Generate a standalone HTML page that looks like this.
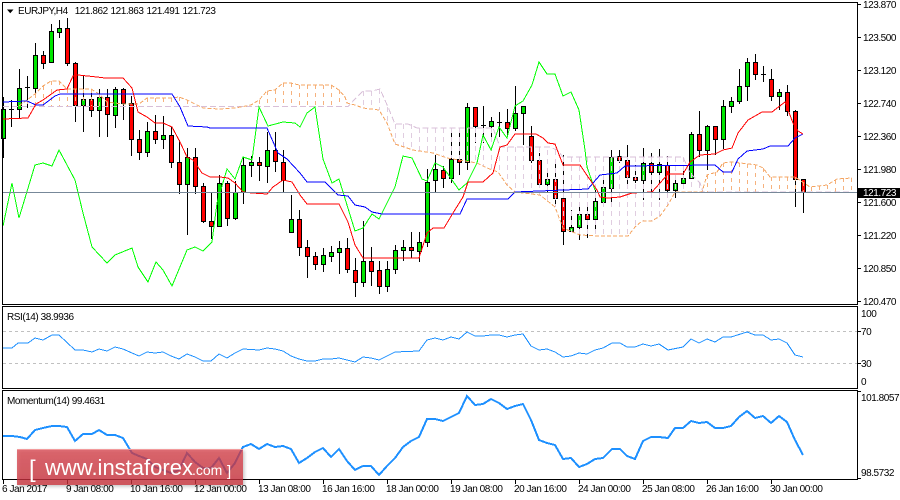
<!DOCTYPE html>
<html><head><meta charset="utf-8"><title>EURJPY,H4</title>
<style>
html,body{margin:0;padding:0;background:#fff;width:900px;height:500px;overflow:hidden}
svg{display:block}
text{font-family:"Liberation Sans",sans-serif;font-size:10px;letter-spacing:-.45px;fill:#000}
.a{shape-rendering:crispEdges;fill:none}
</style></head><body>
<svg width="900" height="500" viewBox="0 0 900 500" xmlns="http://www.w3.org/2000/svg">
<defs><filter id="s" x="-5%" y="-20%" width="110%" height="140%"><feDropShadow dx="1.5" dy="1.5" stdDeviation="1.5" flood-color="#000" flood-opacity=".3"/></filter>
<linearGradient id="g" x1="0" y1="0" x2="0" y2="1"><stop offset="0" stop-color="#d63c44" stop-opacity=".72"/><stop offset="1" stop-color="#c8303a" stop-opacity=".76"/></linearGradient></defs>

<!-- wicks -->
<path class="a" stroke="#000" d="M3.5 97V158M11.5 100V127M9 109.5h5M19.5 69V118M27.5 76V108M25 87.5h5M35.5 43V95M43.5 51V69M51.5 24V63M59.5 20V38M67.5 18V66M75.5 62V122M83.5 76V132M91.5 89V117M99.5 89V137M107.5 89V137M115.5 87V128M123.5 88V120M131.5 96V156M139.5 130V160M147.5 122V157M155.5 115V144M163.5 116V149M171.5 127V168M179.5 140V194M187.5 148V235M195.5 148V194M203.5 183V223M211.5 192V239M219.5 175V227M227.5 181V226M235.5 181V220M243.5 157V204M251.5 156V177M259.5 157V181M267.5 132V183M275.5 132V172M283.5 150V192M291.5 195V232M299.5 210V256M307.5 240V278M315.5 252V270M323.5 248V272M331.5 246V262M339.5 241V274M347.5 238V273M355.5 258V297M363.5 221V287M371.5 247V286M379.5 261V294M387.5 261V292M395.5 245V274M403.5 240V261M411.5 232V258M419.5 232V262M427.5 169V247M435.5 155V192M443.5 166V188M451.5 128V183M459.5 130V175M467.5 103V170M475.5 107V143M483.5 106V143M481 125.5h5M491.5 117V137M499.5 112V137M497 122.5h5M507.5 109V137M515.5 86V131M523.5 106V145M531.5 126V163M539.5 153V187M547.5 170V193M555.5 162V205M563.5 155V245M571.5 210V231M579.5 206V240M587.5 207V238M595.5 190V232M603.5 180V205M611.5 150V204M619.5 150V163M627.5 145V188M635.5 165V183M643.5 148V200M651.5 153V194M659.5 149V200M667.5 156V198M675.5 180V198M683.5 168V184M691.5 132V179M699.5 111V157M707.5 125V170M715.5 126V155M723.5 100V149M731.5 97V113M739.5 69V104M747.5 58V101M755.5 54V80M763.5 66V82M761 74.5h5M771.5 69V101M779.5 89V110M787.5 85V116M795.5 110V207M803.5 179V213"/>

<!-- green bodies -->
<path class="a" style="fill:#00e600" stroke="#000" d="M1.5 109.5h4v29h-4zM17.5 88.5h4v21h-4zM33.5 55.5h4v33h-4zM49.5 31.5h4v31h-4zM57.5 28.5h4v4h-4zM81.5 99.5h4v6h-4zM97.5 97.5h4v13h-4zM113.5 89.5h4v26h-4zM145.5 131.5h4v21h-4zM161.5 135.5h4v4h-4zM185.5 157.5h4v27h-4zM217.5 183.5h4v43h-4zM233.5 192.5h4v26h-4zM241.5 165.5h4v27h-4zM249.5 162.5h4v3h-4zM265.5 150.5h4v16h-4zM289.5 219.5h4v13h-4zM321.5 255.5h4v9h-4zM329.5 252.5h4v4h-4zM337.5 248.5h4v4h-4zM361.5 261.5h4v21h-4zM385.5 269.5h4v17h-4zM393.5 250.5h4v19h-4zM401.5 247.5h4v3h-4zM417.5 242.5h4v9h-4zM425.5 182.5h4v60h-4zM433.5 169.5h4v11h-4zM449.5 159.5h4v19h-4zM465.5 107.5h4v55h-4zM489.5 121.5h4v5h-4zM513.5 113.5h4v15h-4zM521.5 106.5h4v7h-4zM545.5 179.5h4v5h-4zM569.5 227.5h4v4h-4zM577.5 214.5h4v13h-4zM593.5 201.5h4v18h-4zM601.5 187.5h4v15h-4zM609.5 157.5h4v31h-4zM641.5 163.5h4v17h-4zM657.5 164.5h4v8h-4zM673.5 183.5h4v7h-4zM681.5 178.5h4v5h-4zM689.5 134.5h4v44h-4zM705.5 126.5h4v24h-4zM721.5 106.5h4v33h-4zM729.5 101.5h4v5h-4zM737.5 86.5h4v15h-4zM745.5 62.5h4v24h-4zM777.5 92.5h4v4h-4z"/>

<!-- red bodies -->
<path class="a" style="fill:#f00" stroke="#000" d="M41.5 55.5h4v8h-4zM65.5 28.5h4v35h-4zM73.5 63.5h4v42h-4zM89.5 99.5h4v11h-4zM105.5 97.5h4v17h-4zM121.5 89.5h4v14h-4zM129.5 103.5h4v36h-4zM137.5 139.5h4v13h-4zM153.5 131.5h4v8h-4zM169.5 135.5h4v27h-4zM177.5 162.5h4v22h-4zM193.5 157.5h4v29h-4zM201.5 186.5h4v35h-4zM209.5 221.5h4v5h-4zM225.5 183.5h4v35h-4zM257.5 162.5h4v3h-4zM273.5 150.5h4v11h-4zM281.5 162.5h4v18h-4zM297.5 219.5h4v28h-4zM305.5 247.5h4v9h-4zM313.5 256.5h4v8h-4zM345.5 248.5h4v21h-4zM353.5 270.5h4v12h-4zM369.5 261.5h4v10h-4zM377.5 270.5h4v16h-4zM409.5 247.5h4v3h-4zM441.5 170.5h4v8h-4zM457.5 159.5h4v3h-4zM473.5 107.5h4v19h-4zM505.5 122.5h4v6h-4zM529.5 136.5h4v24h-4zM537.5 160.5h4v24h-4zM553.5 179.5h4v19h-4zM561.5 198.5h4v33h-4zM585.5 214.5h4v5h-4zM617.5 156.5h4v4h-4zM625.5 160.5h4v17h-4zM633.5 177.5h4v3h-4zM649.5 163.5h4v9h-4zM665.5 165.5h4v25h-4zM697.5 134.5h4v16h-4zM713.5 126.5h4v13h-4zM753.5 62.5h4v12h-4zM769.5 79.5h4v17h-4zM785.5 92.5h4v19h-4zM793.5 111.5h4v68h-4zM801.5 179.5h4v13h-4z"/>

<!-- cloud hatches -->
<path class="a" stroke="#f6b27e" stroke-dasharray="4 4" d="M27.5 100V106M35.5 94V106M43.5 86V106M51.5 81V106M59.5 81V106M67.5 89V106M75.5 89V106M83.5 89V106M91.5 89V106M99.5 94V106M107.5 102V106M147.5 98V106M155.5 98V106M163.5 98V106M171.5 98V106M179.5 97V106M187.5 100V106M259.5 100V106M267.5 91V106M275.5 90V106M283.5 83V106M291.5 83V106M299.5 85V106M307.5 85V106M315.5 85V106M323.5 85V106M331.5 85V106M339.5 90V106M707.5 175V192M715.5 172V192M723.5 163V192M731.5 162V192M739.5 163V192M747.5 164V192M755.5 165V192M763.5 168V192M771.5 177V192M779.5 177V192M787.5 177V192M795.5 177V192M803.5 182V192M811.5 187V192M819.5 186V192M827.5 185V192M835.5 180V192M843.5 178V192M851.5 178V192"/>
<path class="a" stroke="#e0cde0" stroke-dasharray="5 4" d="M363.5 91V108M371.5 91V108M379.5 89V110M387.5 107V122M395.5 124V144M403.5 124V147M411.5 124V150M419.5 128V151M427.5 128V153M435.5 128V155M443.5 128V156M451.5 128V158M459.5 128V160M467.5 128V162M475.5 128V163M483.5 128V166M491.5 128V170M499.5 147V172M507.5 147V185M515.5 147V192M523.5 147V193M531.5 147V194M539.5 147V195M547.5 150V200M555.5 150V207M563.5 157V228M571.5 157V232M579.5 157V235M587.5 157V236M595.5 157V237M603.5 157V236M611.5 157V236M619.5 157V236M627.5 157V236M635.5 157V226M643.5 157V221M651.5 157V221M659.5 157V216M667.5 157V205M675.5 157V192M683.5 157V192M691.5 173V192M699.5 183V192"/>
<polyline class="a" stroke="#d8bfd8" stroke-dasharray="6 3" points="3,106.5 348,106.5 357,97 363,91 372,91 380,89 388,107 395,124 408,124 417,128 493,128 500,147 550,147 557,150 563,157 683,157 690,173 700,183 703,192 850,192"/>
<polyline class="a" stroke="#f4a460" stroke-dasharray="4 2" points="19,106 27,100 35,94 43,86 51,81 59,81 67,89 91,89 99,94 107,102 123,104 139,104 147,98 171,98 179,97 187,100 195,104 203,108 219,109 235,108 251,105 259,100 267,91 275,90 283,83 291,83 299,85 331,85 339,90 345,97 347,103 355,105 363,108 379,110 387,123 395,144 413,150 433,153 447,158 477,163 487,168 498,172 507,185 515,192 540,195 555,207 563,228 580,235 600,236 628,236 635,227 642,221 652,221 660,216 668,205 675,192 702,192 707,175 717,172 723,163 732,162 757,165 763,168 770,177 795,177 810,187 827,185 837,179 852,178"/>

<!-- chikou green -->
<polyline class="a" stroke="#00ff00" points="3,226 12,183 19,218 35,165 43,163 52,166 59,150 75,180 83,213 92,247 107,263 115,255 132,248 138,267 148,282 156,262 163,270 172,286 187,250 195,247 203,251 212,242 217,203 227,169 235,179 243,157 252,160 259,107 268,126 283,122 295,123 300,127 307,113 315,107 323,159 332,183 339,179 355,231 363,228 372,214 379,219 395,187 403,156 412,158 422,179 427,181 435,163 443,167 459,190 467,183 477,163 483,135 491,150 499,127 507,138 515,106 523,101 532,85 539,62 547,74 555,74 563,96 571,92 579,110 585,150 587,167 595,190"/>
<!-- kijun blue -->
<polyline class="a" stroke="#0000ff" points="3,102 27,101 36,105 43,105 55,96 60,94 172,94 180,107 188,126 207,127 210,128 267,128 278,153 287,159 300,173 307,182 325,182 338,195 348,196 355,205 365,207 372,212 382,214 460,214 467,199 508,199 515,192 588,189 593,183 600,175 617,173 625,166 715,165 723,172 732,172 738,159 747,151 763,149 770,146 788,146 795,138 803,134"/>
<!-- tenkan red -->
<polyline class="a" stroke="#ff0000" points="3,119 28,118 36,104 43,100 57,90 67,89 73,76 78,75 97,77 105,78 123,78 132,88 138,112 147,117 155,123 163,123 172,127 180,142 187,157 193,160 202,173 210,177 220,177 228,178 235,183 243,192 252,193 267,194 273,187 283,180 292,182 300,195 307,204 339,204 348,222 355,245 363,258 419,258 427,233 433,228 444,228 453,213 463,197 468,182 483,182 493,173 500,147 507,145 515,134 536,134 543,138 548,143 555,144 563,165 580,165 597,190 600,197 608,198 620,197 632,193 652,192 668,174 683,174 690,162 700,155 715,154 723,150 732,148 738,133 748,120 762,112 772,112 785,102 793,123 798,131 803,134"/>

<!-- current price line -->
<path class="a" stroke="#778899" d="M3 192.5H857"/>

<!-- RSI levels -->
<path class="a" stroke="#c0c0c0" stroke-dasharray="3 3" d="M3 331.5H857M3 363.5H857"/>
<!-- RSI -->
<polyline class="a" stroke="#1e90ff" points="3,348 12,348 18,343 28,343 35,338 43,340 52,335 59,335 75,350 83,350 92,352 99,349 107,351 115,347 123,349 132,353 139,356 147,352 155,353 163,352 171,356 179,359 187,354 195,357 203,361 211,361 219,354 227,358 235,353 243,349 259,350 267,348 275,349 283,351 291,356 299,359 307,361 315,361 323,359 331,359 339,358 347,360 355,362 363,357 371,358 379,360 395,352 419,351 427,340 435,338 443,340 451,337 459,339 467,332 475,336 483,336 491,335 499,335 507,337 515,335 523,334 531,346 539,350 547,349 555,352 563,357 571,356 579,353 587,354 595,350 603,348 612,343 620,343 627,347 635,347 643,344 651,346 659,344 668,350 683,347 691,339 699,343 707,339 715,342 723,337 731,337 747,332 755,335 763,335 771,340 779,339 787,343 795,355 803,357"/>
<!-- Momentum -->
<polyline class="a" stroke="#1e90ff" stroke-width="2" points="3,436 12,436 20,437 27,439 35,430 43,428 52,426 59,426 67,427 75,441 83,434 92,434 99,430 107,435 115,435 123,438 132,453 139,456 147,459 155,467 163,470 171,473 179,470 187,453 195,462 203,468 211,468 219,458 227,473 235,463 243,447 251,444 259,449 267,444 275,447 283,446 291,449 299,463 307,458 315,452 323,448 331,457 339,449 347,461 355,470 363,466 371,466 379,475 387,466 395,458 403,447 411,441 419,437 427,419 435,419 443,421 451,417 459,413 467,396 475,405 483,404 491,399 499,403 507,409 515,406 523,404 531,420 539,440 547,443 555,445 563,459 571,458 579,467 587,464 595,459 603,458 612,449 620,449 627,456 635,459 643,441 651,437 659,437 668,438 675,428 683,428 691,421 699,423 707,422 715,428 723,428 731,426 739,417 747,411 755,418 763,416 771,423 779,416 787,422 795,440 803,455"/>

<!-- frames -->
<path class="a" stroke="#000" d="M2 2.5H857.5V304.5M2.5 2V305M2 304.5H858M2 306.5H858M2.5 306V389M857.5 306V389M2 388.5H858M2 390.5H858M2.5 390V480M857.5 390V480M2 479.5H858"/>
<!-- ticks -->
<path class="a" stroke="#000" d="M858 4.5h3M858 37.5h3M858 70.5h3M858 103.5h3M858 136.5h3M858 169.5h3M858 202.5h3M858 235.5h3M858 268.5h3M858 301.5h3M858 331.5h3M858 363.5h3M858 391.5h3M858 478.5h3M3.5 480v4M67.5 480v4M131.5 480v4M195.5 480v4M259.5 480v4M323.5 480v4M387.5 480v4M451.5 480v4M515.5 480v4M579.5 480v4M643.5 480v4M707.5 480v4M771.5 480v4"/>

<!-- watermark -->
<rect x="17" y="449" width="226" height="36" fill="url(#g)" filter="url(#s)"/>
<path class="a" stroke="#f29a9c" d="M17 449.5H243"/>
<text x="29" y="477" style="font-size:24px;fill:#fff;letter-spacing:0">[</text>
<text x="45" y="475" style="font-size:22px;fill:#fff;letter-spacing:0">www.instaforex</text>
<text x="192" y="475" style="font-size:14px;fill:#fff;letter-spacing:0">.com</text>
<text x="227" y="476" style="font-size:15px;fill:#fff;letter-spacing:0">]</text>

<!-- header -->
<path d="M7 9.5h6.5l-3.25 3.75z" fill="#000"/>
<text x="18" y="14">EURJPY,H4</text>
<text x="74.7" y="14">121.862</text>
<text x="110.5" y="14">121.863</text>
<text x="146.5" y="14">121.491</text>
<text x="182.5" y="14">121.723</text>

<!-- price scale -->
<text x="863" y="8">123.870</text>
<text x="863" y="41">123.500</text>
<text x="863" y="74">123.120</text>
<text x="863" y="107">122.740</text>
<text x="863" y="140">122.360</text>
<text x="863" y="173">121.980</text>
<text x="863" y="206">121.600</text>
<text x="863" y="239">121.220</text>
<text x="863" y="272">120.850</text>
<text x="863" y="305">120.470</text>
<rect x="858" y="188" width="42" height="10" fill="#000"/>
<text x="863" y="196" style="fill:#fff">121.723</text>

<!-- indicator labels -->
<text x="7" y="320">RSI(14) 38.9936</text>
<text x="7" y="404">Momentum(14) 99.4631</text>
<text x="861" y="317">100</text>
<text x="861" y="335">70</text>
<text x="861" y="367">30</text>
<text x="861" y="385">0</text>
<text x="861" y="401">101.8057</text>
<text x="861" y="476">98.5732</text>

<!-- time axis -->
<text x="2" y="492">6 Jan 2017</text>
<text x="66" y="492">9 Jan 08:00</text>
<text x="130" y="492">10 Jan 16:00</text>
<text x="194" y="492">12 Jan 00:00</text>
<text x="258" y="492">13 Jan 08:00</text>
<text x="322" y="492">16 Jan 16:00</text>
<text x="386" y="492">18 Jan 00:00</text>
<text x="450" y="492">19 Jan 08:00</text>
<text x="514" y="492">20 Jan 16:00</text>
<text x="578" y="492">24 Jan 00:00</text>
<text x="642" y="492">25 Jan 08:00</text>
<text x="706" y="492">26 Jan 16:00</text>
<text x="770" y="492">30 Jan 00:00</text>
</svg>
</body></html>
